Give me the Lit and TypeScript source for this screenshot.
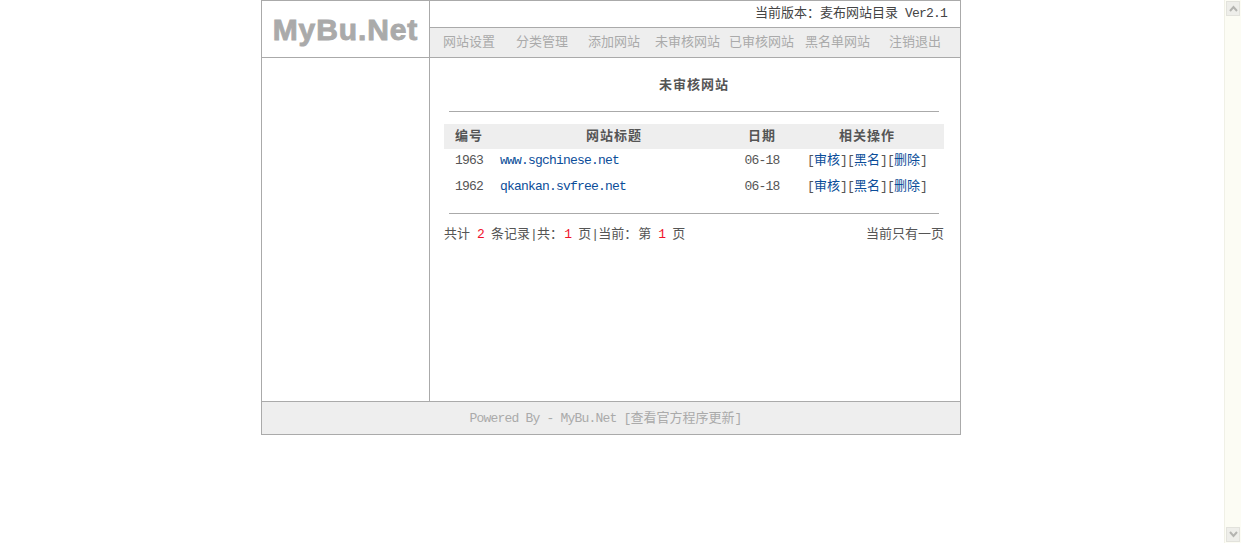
import { LitElement, html, css } from "lit";
import { customElement } from "lit/decorators.js";

const NAV = ["网站设置", "分类管理", "添加网站", "未审核网站", "已审核网站", "黑名单网站", "注销退出"];
const ROWS = [
  { id: "1963", title: "www.sgchinese.net", date: "06-18" },
  { id: "1962", title: "qkankan.svfree.net", date: "06-18" },
];

@customElement("app-root")
export class AppRoot extends LitElement {
  static styles = css`
    :host {
      display: flex;
      height: 543px;
      overflow: hidden;
      background: #fff;
      font-family: "Noto Sans CJK SC", "Liberation Mono", monospace;
      font-size: 13px;
      color: #555;
      line-height: 20px;
    }
    a { color: #0b4d99; text-decoration: none; }
    .en { font-family: "Liberation Mono", monospace; font-size: 13px; letter-spacing: -0.8px; white-space: pre; }
    .page { width: 1222px; flex: none; display: flex; justify-content: center; align-items: flex-start; }
    .frame { width: 700px; box-sizing: border-box; border: 1px solid #aaa; display: grid; grid-template-columns: 167px 530px; column-gap: 1px; background: #aaa; row-gap: 1px; }
    .logo { background: #fff; height: 56px; display: flex; align-items: center; justify-content: center; font-family: "Liberation Sans", sans-serif; font-weight: 700; font-size: 30px; letter-spacing: 0.9px; -webkit-text-stroke: 0.9px #aaa; color: #aaa; line-height: 56px; padding-top: 2px; box-sizing: border-box; }
    .head { height: 56px; display: flex; flex-direction: column; row-gap: 1px; }
    .version { height: 26px; flex: none; background: #fff; display: flex; align-items: center; justify-content: flex-end; padding: 0 13px 2px 0; box-sizing: border-box; color: #444; }
    .nav { height: 29px; flex: none; background: #eee; box-sizing: border-box; padding: 3px 0 0 13px; display: grid; grid-template-columns: 73px 72px 67px 74px 76px 84px 1fr; color: #aaa; }
    .side { background: #fff; height: 343px; }
    .content { background: #fff; height: 343px; box-sizing: border-box; padding: 16px 16px 0 14px; }
    .title { text-align: center; font-weight: 700; letter-spacing: 1px; }
    .rule { height: 1px; background: #aaa; margin: 17px 5px 12px; }
    .rule.low { margin: 12px 5px 9px; }
    .row { display: grid; grid-template-columns: 50px 240px 56px 154px; height: 26px; box-sizing: border-box; padding-bottom: 4px; align-items: center; text-align: center; }
    .row.th { height: 25px; padding: 0 0 3px; background: #eee; font-weight: 700; letter-spacing: 1px; }
    .row .num { padding-top: 2px; }
    .row .left { text-align: left; padding-left: 6px; }
    .foot { display: flex; justify-content: space-between; }
    .foot b { font-weight: 400; color: #f0142c; }
    .colon { margin-right: 1px; }
    .footer { grid-column: 1 / 3; height: 32px; background: #eee; color: #aaa; display: flex; align-items: center; justify-content: center; padding-right: 11px; box-sizing: border-box; }
    .scroll { width: 17px; margin-left: 2px; flex: none; background: #fcfcf4; border-left: 1px solid #f0f0e6; box-sizing: border-box; display: flex; flex-direction: column; justify-content: space-between; align-items: center; padding: 1px 0; }
    .btn { width: 14px; height: 15px; background: #eeeeea; border: 1px solid #e2e2dc; box-sizing: border-box; display: flex; align-items: center; justify-content: center; }
    .btn svg { width: 9px; height: 7px; fill: none; stroke: #b4b4b0; stroke-width: 2; }
  `;

  render() {
    return html`
      <div class="page">
        <div class="frame">
          <div class="logo">MyBu.Net</div>
          <div class="head">
            <div class="version"><span>当前版本：麦布网站目录<span class="en"> Ver2.1</span></span></div>
            <nav class="nav">${NAV.map((n) => html`<span>${n}</span>`)}</nav>
          </div>
          <div class="side"></div>
          <main class="content">
            <div class="title">未审核网站</div>
            <div class="rule"></div>
            <div class="row th"><span>编号</span><span>网站标题</span><span>日期</span><span>相关操作</span></div>
            ${ROWS.map(
              (r) => html`<div class="row">
                <span class="en num">${r.id}</span>
                <span class="left en num"><a href="#">${r.title}</a></span>
                <span class="en num">${r.date}</span>
                <span><span class="en">[</span><a href="#">审核</a><span class="en">]</span><span class="en">[</span><a href="#">黑名</a><span class="en">]</span><span class="en">[</span><a href="#">删除</a><span class="en">]</span></span>
              </div>`
            )}
            <div class="rule low"></div>
            <div class="foot">
              <span>共计<span class="en"> </span><b class="en">2</b><span class="en"> </span>条记录<span class="en">|</span>共<span class="colon">：</span><b class="en">1</b><span class="en"> </span>页<span class="en">|</span>当前<span class="colon">：</span>第<span class="en"> </span><b class="en">1</b><span class="en"> </span>页</span>
              <span>当前只有一页</span>
            </div>
          </main>
          <footer class="footer"><span><span class="en">Powered By - MyBu.Net [</span>查看官方程序更新<span class="en">]</span></span></footer>
        </div>
      </div>
      <aside class="scroll">
        <div class="btn"><svg viewBox="0 0 9 7"><path d="M1 6 L4.5 2 L8 6"></path></svg></div>
        <div class="btn"><svg viewBox="0 0 9 7"><path d="M1 1 L4.5 5 L8 1"></path></svg></div>
      </aside>
    `;
  }
}
